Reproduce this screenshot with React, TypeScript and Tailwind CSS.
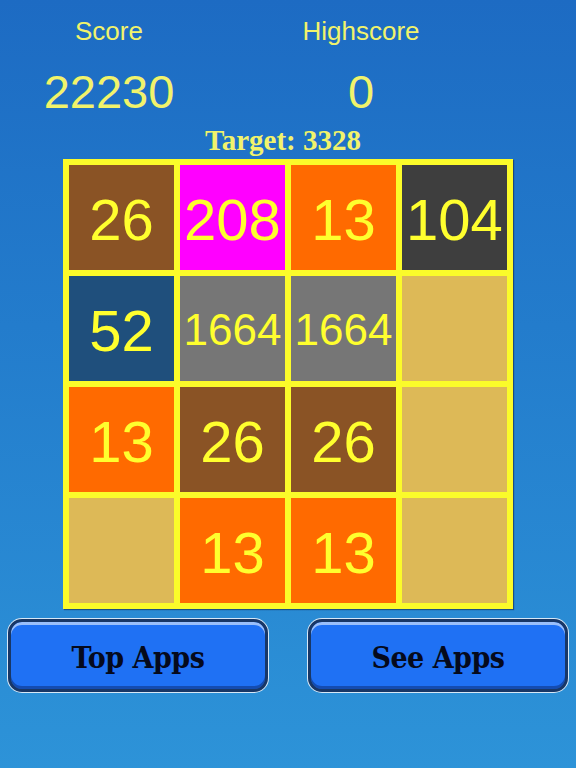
import React from 'react'

type Tile = { value?: number; color: string }

const board: Tile[] = [
  { value: 26, color: 'bg-[#8a5325]' },
  { value: 208, color: 'bg-[#ff00ff]' },
  { value: 13, color: 'bg-[#ff6a00]' },
  { value: 104, color: 'bg-[#3e3e3e]' },
  { value: 52, color: 'bg-[#1f4f7c]' },
  { value: 1664, color: 'bg-[#767676]' },
  { value: 1664, color: 'bg-[#767676]' },
  { color: 'bg-[#ddb957]' },
  { value: 13, color: 'bg-[#ff6a00]' },
  { value: 26, color: 'bg-[#8a5325]' },
  { value: 26, color: 'bg-[#8a5325]' },
  { color: 'bg-[#ddb957]' },
  { color: 'bg-[#ddb957]' },
  { value: 13, color: 'bg-[#ff6a00]' },
  { value: 13, color: 'bg-[#ff6a00]' },
  { color: 'bg-[#ddb957]' },
]

const sans = { fontFamily: '"Liberation Sans", Arial, sans-serif' }

function AppButton({ label }: { label: string }) {
  return (
    <button
      className="h-[73px] w-[260px] rounded-[14px] border-[3px] border-[#183766] bg-[#1f71f4] pt-[3px] text-[30px] font-black tracking-[-0.5px] text-[#050a1c] [font-stretch:condensed] shadow-[0_0_0_1px_#d7e8f7,inset_0_3px_0_rgba(255,255,255,0.55),inset_0_-3px_0_rgba(10,40,110,0.5)]"
      style={{ fontFamily: '"DejaVu Serif", serif' }}
    >
      {label}
    </button>
  )
}

export default function App() {
  return (
    <div className="flex h-[768px] w-[576px] flex-col bg-gradient-to-b from-[#1d6bc3] to-[#2d93d8]" style={sans}>
      {/* Scores */}
      <div className="flex pt-[15px] text-[#f1f36b]">
        <div className="flex w-[218px] flex-col items-center">
          <div className="text-[26px] leading-[32px]">Score</div>
          <div className="mt-[18px] text-[47px] leading-[54px]">22230</div>
        </div>
        <div className="flex w-[286px] flex-col items-center">
          <div className="text-[26px] leading-[32px]">Highscore</div>
          <div className="mt-[18px] text-[47px] leading-[54px]">0</div>
        </div>
      </div>

      <div
        className="mt-[4px] w-[566px] text-center text-[29px] font-bold leading-[34px] text-[#f1f36b]"
        style={{ fontFamily: '"Liberation Serif", "Times New Roman", serif' }}
      >
        Target: 3328
      </div>

      {/* Board */}
      <div className="ml-[63px] mt-[2px] grid w-[450px] grid-cols-4 gap-[6px] bg-[#fbfb2a] p-[6px] shadow-[1px_1px_1px_rgba(20,40,80,0.6)]">
        {board.map((tile, i) => (
          <div
            key={i}
            className={`flex h-[105px] items-center justify-center pt-[3px] ${tile.color} text-[#ffff2e] ${
              tile.value && tile.value > 999 ? 'text-[44px]' : 'text-[58px]'
            }`}
          >
            {tile.value}
          </div>
        ))}
      </div>

      {/* Buttons */}
      <div className="mt-[10px] flex justify-between px-[8px]">
        <AppButton label="Top Apps" />
        <AppButton label="See Apps" />
      </div>
    </div>
  )
}
